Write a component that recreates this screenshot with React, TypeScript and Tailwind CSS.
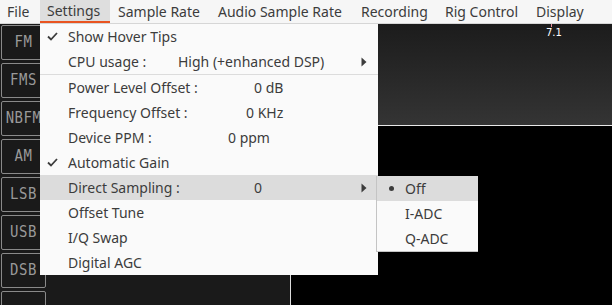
import React from "react";

const Check = () => (
  <svg width="11" height="9" viewBox="0 0 11 9" className="block">
    <path d="M1 4.5 L4 7.5 L10 1" stroke="#3c3c3c" strokeWidth="1.8" fill="none" />
  </svg>
);

const Arrow = () => (
  <svg width="6" height="10" viewBox="0 0 6 10" className="block">
    <path d="M0.5 0.5 L5.5 5 L0.5 9.5 Z" fill="#3c3c3c" />
  </svg>
);

type Item = {
  label: string;
  check?: boolean;
  value?: string;
  valueOffset?: number;
  arrow?: boolean;
  hl?: boolean;
};

const Row = ({ it }: { it: Item }) => (
  <div className={`flex h-[25px] items-center ${it.hl ? "bg-[#dcdcdc]" : ""}`}>
    <div className="flex w-[28px] shrink-0 items-center pl-[7px]">{it.check ? <Check /> : null}</div>
    {it.value !== undefined ? (
      <>
        <span className="shrink-0 whitespace-nowrap" style={{ width: it.valueOffset }}>
          {it.label}
        </span>
        <span className="whitespace-nowrap">{it.value}</span>
      </>
    ) : (
      <span className="whitespace-nowrap">{it.label}</span>
    )}
    {it.arrow ? (
      <div className="ml-auto mr-[11px]">
        <Arrow />
      </div>
    ) : null}
  </div>
);

export default function App() {
  const menus: { t: string; w: number; pl: number }[] = [
    { t: "File", w: 40, pl: 7 },
    { t: "Settings", w: 70, pl: 7 },
    { t: "Sample Rate", w: 100, pl: 8 },
    { t: "Audio Sample Rate", w: 143, pl: 8 },
    { t: "Recording", w: 84, pl: 8 },
    { t: "Rig Control", w: 91, pl: 8 },
    { t: "Display", w: 70, pl: 8 },
  ];
  const modes = ["FM", "FMS", "NBFM", "AM", "LSB", "USB", "DSB", ""];
  const top: Item[] = [
    { label: "Show Hover Tips", check: true },
    { label: "CPU usage :", value: "High (+enhanced DSP)", valueOffset: 110, arrow: true },
  ];
  const bottom: Item[] = [
    { label: "Power Level Offset :", value: "0 dB", valueOffset: 186 },
    { label: "Frequency Offset :", value: "0 KHz", valueOffset: 178 },
    { label: "Device PPM :", value: "0 ppm", valueOffset: 160 },
    { label: "Automatic Gain", check: true },
    { label: "Direct Sampling :", value: "0", valueOffset: 186, arrow: true, hl: true },
    { label: "Offset Tune" },
    { label: "I/Q Swap" },
    { label: "Digital AGC" },
  ];
  return (
    <div
      className="relative h-[305px] w-[612px] overflow-hidden bg-[#1a1a1a] text-[14px] text-[#3c3c3c]"
      style={{ fontFamily: '"Noto Sans", "Open Sans", sans-serif' }}
    >
      {/* menubar */}
      <div className="flex h-[24px] items-stretch border-b border-[#d6d6d6] bg-[#f6f6f6]">
        {menus.map((m) => (
          <div
            key={m.t}
            className={`flex shrink-0 items-center whitespace-nowrap ${m.t === "Settings" ? "border-b-2 border-[#e95420] bg-[#dedede]" : ""}`}
            style={{ width: m.w, paddingLeft: m.pl }}
          >
            {m.t}
          </div>
        ))}
      </div>
      {/* body */}
      <div className="flex h-[281px]">
        <div className="flex w-[46px] shrink-0 flex-col gap-[3px] pl-px pt-[1px]">
          {modes.map((m, i) => (
            <div
              key={i}
              className="flex h-[35px] shrink-0 items-center justify-center rounded-[2px] border border-[#8a8a8a] bg-[#1a1a1a] text-[14px] tracking-[0.5px] text-[#999999]"
              style={{ fontFamily: '"DejaVu Sans Mono", monospace' }}
            >
              <span className="inline-block scale-y-110">{m}</span>
            </div>
          ))}
        </div>
        <div className="w-[244px] shrink-0 bg-[#1a1a1a]" />
        <div className="flex flex-1 flex-col">
          <div className="relative h-[101px] bg-gradient-to-b from-[#1c1c1c] to-[#343434]">
            <div className="absolute left-[261px] top-0 h-[3px] w-px bg-[#e890a0]" />
            <div
              className="absolute left-[256px] top-[3px] text-[10px] leading-[12px] text-white"
              style={{ fontFamily: '"DejaVu Sans", sans-serif' }}
            >
              7.1
            </div>
          </div>
          <div className="h-px bg-[#e8e8e8]" />
          <div className="flex-1 border-l border-[#dcdcdc] bg-black" />
        </div>
      </div>
      {/* dropdown */}
      <div className="absolute left-[40px] top-[24px] w-[338px] bg-[#fafafa]">
        {top.map((it) => (
          <Row key={it.label} it={it} />
        ))}
        <div className="h-px bg-[#dcdcdc]" />
        {bottom.map((it) => (
          <Row key={it.label} it={it} />
        ))}
      </div>
      {/* submenu */}
      <div className="absolute left-[376px] top-[176px] w-[102px] border-b border-l border-[#c4c4c4] bg-[#fafafa]">
        {["Off", "I-ADC", "Q-ADC"].map((s, i) => (
          <div key={s} className={`flex h-[25px] items-center ${i === 0 ? "bg-[#dcdcdc]" : ""}`}>
            <div className="flex w-[28px] shrink-0 justify-center pl-[1px]">
              {i === 0 ? <div className="h-[5px] w-[5px] rounded-full bg-[#3c3c3c]" /> : null}
            </div>
            <span>{s}</span>
          </div>
        ))}
      </div>
    </div>
  );
}
